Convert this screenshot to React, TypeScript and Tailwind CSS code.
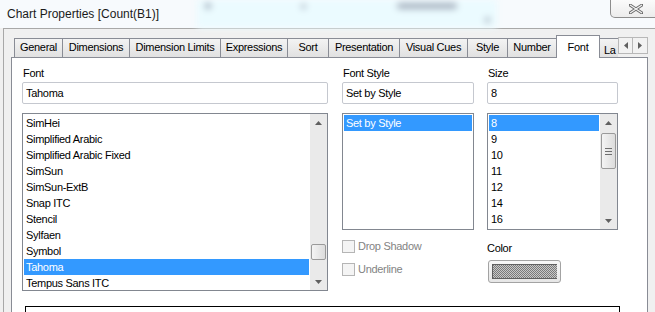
import React from 'react'

const fonts = ['SimHei', 'Simplified Arabic', 'Simplified Arabic Fixed', 'SimSun', 'SimSun-ExtB', 'Snap ITC', 'Stencil', 'Sylfaen', 'Symbol', 'Tahoma', 'Tempus Sans ITC']
const sizes = ['8', '9', '10', '11', '12', '14', '16']

const tabs = [
  { label: 'General', w: 'w-[48px]' },
  { label: 'Dimensions', w: 'w-[67px]' },
  { label: 'Dimension Limits', w: 'w-[91px]' },
  { label: 'Expressions', w: 'w-[67px]' },
  { label: 'Sort', w: 'w-[41px]' },
  { label: 'Presentation', w: 'w-[71px]' },
  { label: 'Visual Cues', w: 'w-[68px]' },
  { label: 'Style', w: 'w-[40px]' },
  { label: 'Number', w: 'w-[49px]' },
]

function Arrow({ dir }: { dir: 'up' | 'down' | 'left' | 'right' }) {
  const pts = {
    up: '0,4 7,4 3.5,0',
    down: '0,0 7,0 3.5,4',
    left: '4,0 4,7 0,3.5',
    right: '0,0 0,7 4,3.5',
  }[dir]
  const vertical = dir === 'up' || dir === 'down'
  return (
    <svg width={vertical ? 7 : 4} height={vertical ? 4 : 7} viewBox={vertical ? '0 0 7 4' : '0 0 4 7'}>
      <polygon points={pts} fill="#606060" />
    </svg>
  )
}

function Scrollbar({ thumbTop, thumbH, grip }: { thumbTop: string; thumbH: string; grip?: boolean }) {
  return (
    <div className="w-[17px] h-full bg-[#eaeaea] flex flex-col items-center">
      <div className="h-[17px] w-full flex items-center justify-center"><Arrow dir="up" /></div>
      <div className={`${thumbTop} ${thumbH} w-[15px] rounded-[2px] border border-[#9a9a9a] bg-linear-to-r from-[#f4f4f4] to-[#dcdcdc] flex flex-col items-center justify-center gap-[2px]`}>
        {grip && (
          <>
            <div className="w-[7px] h-px bg-[#6e6e6e]" />
            <div className="w-[7px] h-px bg-[#6e6e6e]" />
            <div className="w-[7px] h-px bg-[#6e6e6e]" />
          </>
        )}
      </div>
      <div className="flex-1" />
      <div className="h-[17px] w-full flex items-center justify-center"><Arrow dir="down" /></div>
    </div>
  )
}

function Field({ label, value, w }: { label: string; value: string; w: string }) {
  return (
    <>
      <div className="h-[13px] leading-[13px] pl-px">{label}</div>
      <div className={`mt-[2px] h-[22px] ${w} border border-[#c5c8cf] rounded-[2px] bg-white flex items-center pl-[3px]`}>{value}</div>
    </>
  )
}

export default function App() {
  return (
    <div className="w-[655px] h-[312px] overflow-hidden bg-[#f0f0f0] flex flex-col text-[11px] text-black tracking-[-0.3px] font-['Liberation_Sans',Arial,sans-serif]">
      {/* title bar */}
      <div className="relative h-[28px] shrink-0 bg-[#f7fafd] flex items-center pl-[7px] text-[12px] tracking-normal text-[#1a1a1a]">
        Chart Properties [Count(B1)]
        <div className="absolute left-[197px] top-0 w-[300px] h-[28px] bg-[#ebfbff] blur-[3px]">
          <div className="absolute left-[8px] top-[3px] w-[6px] h-[6px] bg-[#9aa5b5] rounded-full blur-[1px]" />
          <div className="absolute left-[104px] top-[4px] w-[5px] h-[5px] bg-[#a9b3c0] rounded-full blur-[1px]" />
          <div className="absolute left-[200px] top-[3px] w-[60px] h-[6px] bg-[#a6b0be] rounded-full blur-[1px]" />
          <div className="absolute left-[288px] top-[17px] w-[5px] h-[6px] bg-[#aab4c2] rounded-full blur-[1px]" />
        </div>
        <div className="absolute left-[610px] top-0 w-[52px] h-[18px] border border-t-0 border-[#8d8d8d] rounded-b-[5px] bg-linear-to-b from-[#fbfbfb] to-[#ececec] flex items-center justify-start pl-[18px]">
          <svg width="14" height="10" viewBox="0 0 14 10">
            <path d="M1 1 L13 9 M13 1 L1 9" stroke="#6a6a6a" strokeWidth="3" strokeLinecap="square" />
            <path d="M1 1 L13 9 M13 1 L1 9" stroke="#f4f4f4" strokeWidth="1.2" />
          </svg>
        </div>
      </div>

      {/* body */}
      <div className="flex-1 ml-[3px] border-l border-t border-[#a8a8a8] pl-[7px] pt-[6px] flex flex-col">
        {/* tabs */}
        <div className="relative h-[22px] shrink-0 flex items-end pl-[3px] z-10">
          {tabs.map((t, i) => (
            <div
              key={t.label}
              className={`${t.w} h-[19px] border-t border-l ${i === tabs.length - 1 ? '' : ''} border-[#898c95] bg-linear-to-b from-[#f3f3f3] to-[#e1e1e1] flex items-center justify-center pb-px`}
            >
              {t.label}
            </div>
          ))}
          <div className="w-[44px] h-[23px] -mb-px border-t border-l border-r border-[#898c95] bg-white flex items-start justify-center pt-[3px]">Font</div>
          <div className="w-[18px] h-[19px] border-t border-[#898c95] bg-linear-to-b from-[#f3f3f3] to-[#e1e1e1] overflow-hidden pl-[4px] pt-[3px]">La</div>
          <div className="absolute left-[607px] top-[2px] flex">
            <div className="w-[15px] h-[17px] border border-[#b8b8b8] bg-[#f2f2f2] flex items-center justify-center"><Arrow dir="left" /></div>
            <div className="w-[15px] h-[17px] border border-l-0 border-[#b8b8b8] bg-[#f2f2f2] flex items-center justify-center"><Arrow dir="right" /></div>
          </div>
        </div>

        {/* panel */}
        <div className="flex-1 w-[637px] bg-white border border-b-0 border-[#898c95] pl-[10px] pt-[9px] flex flex-col">
          <div className="flex">
            {/* font column */}
            <div className="w-[306px] flex flex-col">
              <Field label="Font" value="Tahoma" w="w-[306px]" />
              <div className="mt-[9px] h-[178px] border border-[#828790] flex">
                <div className="flex-1 p-px overflow-hidden">
                  {fonts.map(f => (
                    <div key={f} className={`h-[16px] leading-[16px] pl-[2px] ${f === 'Tahoma' ? 'bg-[#3399ff] text-white' : ''}`}>{f}</div>
                  ))}
                </div>
                <Scrollbar thumbTop="mt-[113px]" thumbH="h-[16px]" />
              </div>
            </div>

            {/* font style column */}
            <div className="ml-[14px] w-[132px] flex flex-col">
              <Field label="Font Style" value="Set by Style" w="w-[132px]" />
              <div className="mt-[9px] h-[117px] border border-[#828790] p-px">
                <div className="h-[16px] leading-[16px] pl-[2px] bg-[#3399ff] text-white">Set by Style</div>
              </div>
              <div className="mt-[9px] flex items-center h-[14px] text-[#838383]">
                <div className="w-[13px] h-[13px] border border-[#b5b5b5] bg-[#f4f4f4]" />
                <span className="ml-[3px]">Drop Shadow</span>
              </div>
              <div className="mt-[9px] flex items-center h-[14px] text-[#838383]">
                <div className="w-[13px] h-[13px] border border-[#b5b5b5] bg-[#f4f4f4]" />
                <span className="ml-[3px]">Underline</span>
              </div>
            </div>

            {/* size column */}
            <div className="ml-[13px] w-[131px] flex flex-col">
              <Field label="Size" value="8" w="w-[131px]" />
              <div className="mt-[9px] h-[117px] border border-[#828790] flex">
                <div className="flex-1 p-px overflow-hidden">
                  {sizes.map(s => (
                    <div key={s} className={`h-[16px] leading-[16px] pl-[2px] ${s === '8' ? 'bg-[#3399ff] text-white' : ''}`}>{s}</div>
                  ))}
                </div>
                <Scrollbar thumbTop="mt-[2px]" thumbH="h-[36px]" grip />
              </div>
              <div className="mt-[12px] h-[13px] leading-[13px]">Color</div>
              <div className="mt-[5px] ml-px w-[73px] h-[23px] rounded-[3px] border border-[#a3a3a3] bg-linear-to-b from-[#f7f7f7] to-[#e6e6e6] p-[3px]">
                <svg width="100%" height="100%" className="block">
                  <defs>
                    <pattern id="chk" width="2" height="2" patternUnits="userSpaceOnUse">
                      <rect width="2" height="2" fill="#c8c8c8" />
                      <rect width="1" height="1" fill="#7a7a7a" />
                      <rect x="1" y="1" width="1" height="1" fill="#7a7a7a" />
                    </pattern>
                  </defs>
                  <rect x="0.5" y="0.5" width="66" height="14" fill="url(#chk)" stroke="#606060" />
                </svg>
              </div>
            </div>
          </div>

          <div className="mt-[15px] ml-[3px] w-[595px] h-[40px] border border-black" />
        </div>
      </div>
    </div>
  )
}
